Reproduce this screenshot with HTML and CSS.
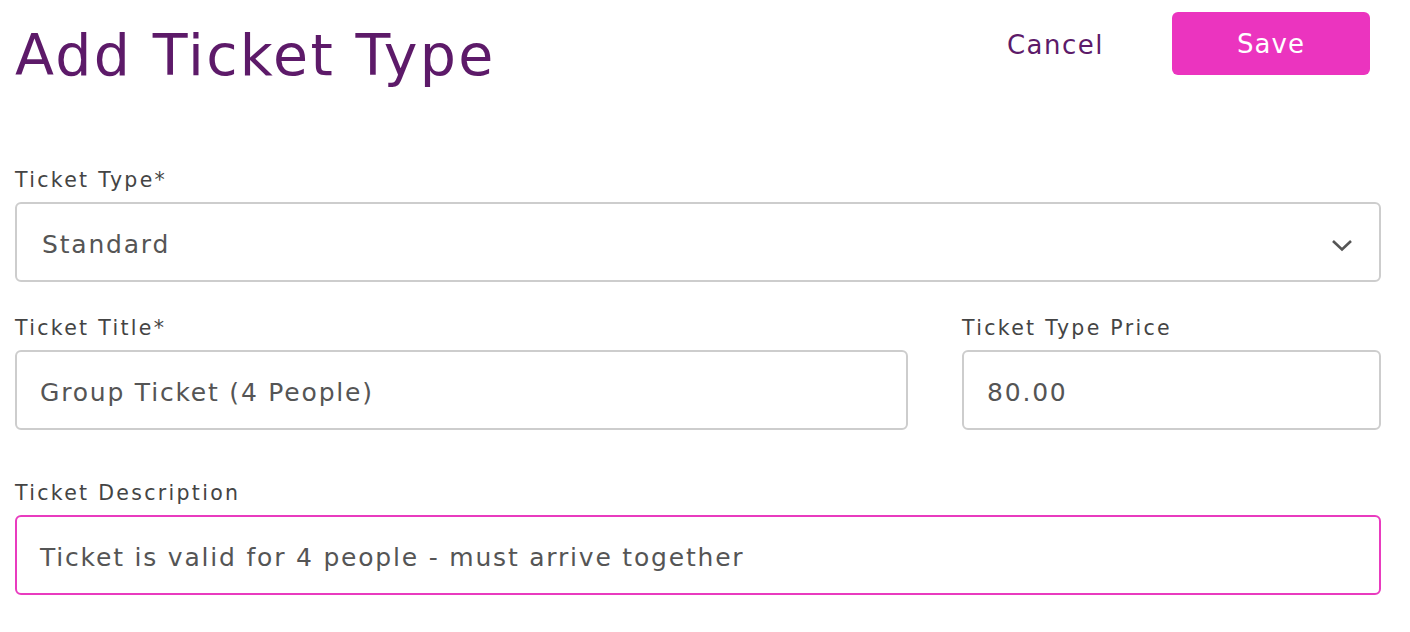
FILE: index.html
```html
<!DOCTYPE html>
<html lang="en">
<head>
<meta charset="utf-8">
<title>Add Ticket Type</title>
<link rel="stylesheet" href="styles.css">
</head>
<body>
<div class="page">
  <header class="header">
    <h1 class="title">Add Ticket Type</h1>
    <div class="actions">
      <button class="btn-cancel" type="button">Cancel</button>
      <button class="btn-save" type="button">Save</button>
    </div>
  </header>

  <form class="form">
    <div class="field">
      <label class="label">Ticket Type*</label>
      <div class="select">
        <span class="value">Standard</span>
        <svg class="chevron" width="22" height="14" viewBox="0 0 22 14" aria-hidden="true">
          <path d="M2 3 L11 11.5 L20 3" fill="none" stroke="#555" stroke-width="2.6"/>
        </svg>
      </div>
    </div>

    <div class="row">
      <div class="field grow">
        <label class="label">Ticket Title*</label>
        <div class="input"><span class="value">Group Ticket (4 People)</span></div>
      </div>
      <div class="field price">
        <label class="label">Ticket Type Price</label>
        <div class="input"><span class="value">80.00</span></div>
      </div>
    </div>

    <div class="field desc">
      <label class="label">Ticket Description</label>
      <div class="input focused"><span class="value">Ticket is valid for 4 people - must arrive together</span></div>
    </div>
  </form>
</div>
</body>
</html>
```

FILE: styles.css
```css
* { box-sizing: border-box; }
html, body { margin: 0; padding: 0; background: #fff; }
body {
  font-family: "DejaVu Sans", "Noto Sans", sans-serif;
  color: #444;
}
.page {
  padding: 12px 29px 0 15px;
}
.header {
  display: flex;
  justify-content: space-between;
  align-items: flex-start;
  height: 156px;
}
.title {
  margin: 0;
  padding-top: 11px;
  font-size: 57px;
  line-height: 64px;
  font-weight: 400;
  color: #5d1a69;
  letter-spacing: 2.3px;
}
.actions {
  display: flex;
  align-items: center;
  gap: 68px;
  margin-right: 11px;
}
.btn-cancel {
  border: none;
  background: none;
  padding: 0;
  margin-top: 3px;
  font-family: inherit;
  font-size: 26px;
  letter-spacing: 1.5px;
  color: #5d1a69;
  cursor: pointer;
}
.btn-save {
  width: 198px;
  height: 63px;
  border: none;
  border-radius: 6px;
  background: #eb34bf;
  color: #fff;
  font-family: inherit;
  font-size: 26px;
  letter-spacing: 1px;
  padding-top: 2px;
  cursor: pointer;
}
.form {
  display: flex;
  flex-direction: column;
  gap: 34px;
}
.row {
  display: flex;
  gap: 54px;
}
.grow { flex: 1; }
.price { width: 419px; }
.field {
  display: flex;
  flex-direction: column;
  gap: 10px;
}
.desc { margin-top: 17px; }
.label {
  font-size: 20.5px;
  line-height: 24px;
  letter-spacing: 2.3px;
  color: #444;
}
.select, .input {
  height: 80px;
  border: 2.5px solid #cdcdcd;
  border-radius: 6px;
  display: flex;
  align-items: center;
  justify-content: space-between;
}
.select { padding: 4px 26px 0 25px; }
.input { padding: 4px 23px 0; }
.input.focused { border-color: #e93bbf; }
.value {
  font-size: 25px;
  letter-spacing: 1.8px;
  color: #555;
}
.chevron { display: block; margin-top: 2px; }
```
